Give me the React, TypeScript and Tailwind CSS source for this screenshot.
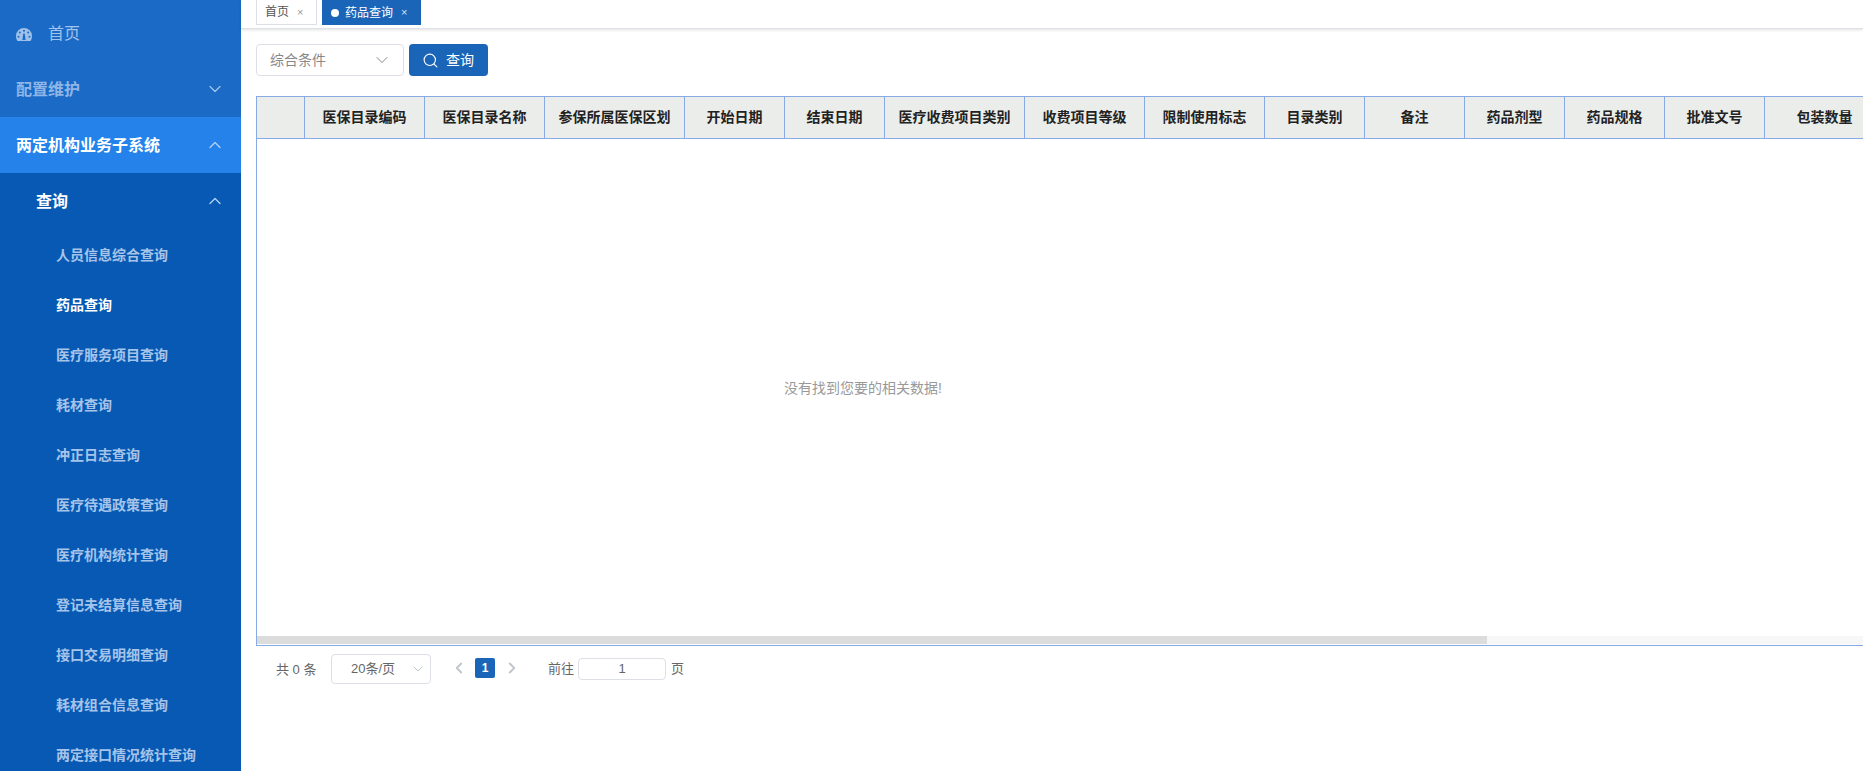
import { ChevronDown, ChevronUp, ChevronLeft, ChevronRight, Search } from "lucide-react";

const font = { fontFamily: '"Liberation Sans", "Noto Sans CJK SC", sans-serif' };

const subItems = ["人员信息综合查询", "药品查询", "医疗服务项目查询", "耗材查询", "冲正日志查询", "医疗待遇政策查询", "医疗机构统计查询", "登记未结算信息查询", "接口交易明细查询", "耗材组合信息查询", "两定接口情况统计查询"];

const cols: [string, string][] = [
  ["医保目录编码", "w-[120px]"], ["医保目录名称", "w-[120px]"], ["参保所属医保区划", "w-[140px]"], ["开始日期", "w-[100px]"], ["结束日期", "w-[100px]"],
  ["医疗收费项目类别", "w-[140px]"], ["收费项目等级", "w-[120px]"], ["限制使用标志", "w-[120px]"], ["目录类别", "w-[100px]"], ["备注", "w-[100px]"],
  ["药品剂型", "w-[100px]"], ["药品规格", "w-[100px]"], ["批准文号", "w-[100px]"], ["包装数量", "w-[120px]"],
];

function Gauge() {
  return (
    <svg width="16" height="13" viewBox="0 0 16 13" fill="#9fc0ea">
      <path fillRule="evenodd" d="M8 0a8 8 0 0 0-8 8c0 1.900.5 3.500 1.400 5h13.200c.9-1.500 1.400-3.100 1.400-5a8 8 0 0 0-8-8zM8 1.800a1 1 0 1 1 0 2 1 1 0 0 1 0-2zM3.800 3.500a1 1 0 1 1 0 2 1 1 0 0 1 0-2zM12.200 3.500a1 1 0 1 1 0 2 1 1 0 0 1 0-2zM2.500 7.800a1 1 0 1 1 0 2 1 1 0 0 1 0-2zM13.500 7.800a1 1 0 1 1 0 2 1 1 0 0 1 0-2zM7.300 5.500h1.400l.9 6.500H6.400z" />
    </svg>
  );
}

export default function App() {
  return (
    <div style={font} className="flex h-[771px] w-[1863px] overflow-hidden bg-white">
      <aside className="flex w-[241px] shrink-0 flex-col overflow-hidden bg-[#1a6ac6]">
        <div className="flex h-[61px] shrink-0 items-center gap-[16px] pl-[16px] pt-[7px] text-[16px] text-[#a3c3eb]">
          <Gauge />
          <span>首页</span>
        </div>
        <div className="flex h-[56px] shrink-0 items-center justify-between pl-[16px] pr-[16px] pt-[2px] text-[16px] font-bold text-[#8fb6e6]">
          <span>配置维护</span>
          <ChevronDown size={20} strokeWidth={1.5} className="mb-[3px] text-[#a3c3eb]" />
        </div>
        <div className="flex h-[56px] shrink-0 items-center justify-between bg-[#2482ea] pl-[16px] pr-[16px] pt-[2px] text-[16px] font-bold text-white">
          <span>两定机构业务子系统</span>
          <ChevronUp size={20} strokeWidth={1.5} className="mb-[3px] text-[#b5d3f5]" />
        </div>
        <div className="flex-1 bg-[#0759b3]">
          <div className="flex h-[56px] items-center justify-between pl-[36px] pr-[16px] pt-[2px] text-[16px] font-bold text-white">
            <span>查询</span>
            <ChevronUp size={20} strokeWidth={1.5} className="mb-[3px] text-[#b5d3f5]" />
          </div>
          {subItems.map((s, i) => (
            <div key={s} className={`flex h-[50px] items-center pl-[56px] pt-[2px] text-[14px] font-bold ${i === 1 ? "text-white" : "text-[#a6c4ea]"}`}>
              {s}
            </div>
          ))}
        </div>
      </aside>
      <main className="flex min-w-0 flex-1 flex-col">
        <div className="flex h-[29px] shrink-0 items-start gap-[5px] border-b border-[#dfe1e8] pl-[15px] shadow-[0_1px_3px_rgba(0,0,0,0.12)]">
          <div className="flex h-[25px] w-[61px] items-center gap-[8px] border border-t-0 border-[#dcdfe6] pl-[8px] text-[12px] text-[#555]">
            <span>首页</span>
            <span className="text-[11px] text-[#999]">×</span>
          </div>
          <div className="flex h-[25px] w-[99px] items-center bg-[#1a65b8] pl-[9px] text-[12px] text-white">
            <span className="mr-[6px] h-[8px] w-[8px] rounded-full bg-white" />
            <span>药品查询</span>
            <span className="ml-[8px] text-[11px] text-[#d5e3f5]">×</span>
          </div>
        </div>
        <div className="flex gap-[5px] pl-[15px] pt-[15px]">
          <div className="flex h-[32px] w-[148px] items-center justify-between rounded-[4px] border border-[#dcdfe6] pl-[13px] pr-[11px] text-[14px] text-[#888]">
            <span>综合条件</span>
            <ChevronDown size={20} strokeWidth={1.2} className="text-[#888]" />
          </div>
          <div className="flex h-[32px] w-[79px] items-center gap-[7px] rounded-[4px] bg-[#1a65b8] pl-[13px] text-[14px] text-white">
            <Search size={17} strokeWidth={1.6} />
            <span>查询</span>
          </div>
        </div>
        <div className="ml-[15px] mt-[20px] flex h-[550px] flex-col overflow-hidden border-y border-l border-[#88abe6]">
          <div className="flex h-[42px] shrink-0 border-b border-[#88abe6] bg-[#ebedeb]">
            <div className="w-[48px] shrink-0 border-r border-[#88abe6]" />
            {cols.map(([c, w]) => (
              <div key={c} className={`${w} flex shrink-0 items-center justify-center border-r border-[#88abe6] text-[14px] font-bold text-[#222]`}>
                {c}
              </div>
            ))}
          </div>
          <div className="flex flex-1 items-center pl-[527px] pt-[1px] text-[14px] text-[#999]">
            <span>没有找到您要的相关数据!</span>
          </div>
          <div className="mb-px h-[8px] shrink-0 bg-[#f7f7f7]">
            <div className="h-full w-[1230px] bg-[#dcdcdc]" />
          </div>
        </div>
        <div className="flex items-start pl-[35px] pt-[8px] text-[13px] text-[#666]">
          <span className="mt-[6px] w-[40px] whitespace-nowrap">共 0 条</span>
          <div className="relative ml-[15px] flex h-[30px] w-[100px] items-center rounded-[4px] border border-[#dcdfe6] pl-[19px]">
            <span>20条/页</span>
            <ChevronDown size={16} strokeWidth={1.5} className="absolute right-[4px] text-[#c0c4cc]" />
          </div>
          <ChevronLeft size={18} strokeWidth={2.4} className="ml-[19px] mt-[5px] text-[#c0c4cc]" />
          <div className="ml-[7px] mt-[4px] flex h-[20px] w-[20px] items-center justify-center rounded-[2px] bg-[#1a65b8] text-[12px] font-bold text-white">1</div>
          <ChevronRight size={18} strokeWidth={2.4} className="ml-[8px] mt-[5px] text-[#c0c4cc]" />
          <span className="ml-[27px] mt-[5px] w-[27px] whitespace-nowrap">前往</span>
          <div className="ml-[3px] mt-[4px] flex h-[22px] w-[88px] items-center justify-center rounded-[4px] border border-[#dcdfe6]">1</div>
          <span className="ml-[5px] mt-[5px]">页</span>
        </div>
      </main>
    </div>
  );
}
